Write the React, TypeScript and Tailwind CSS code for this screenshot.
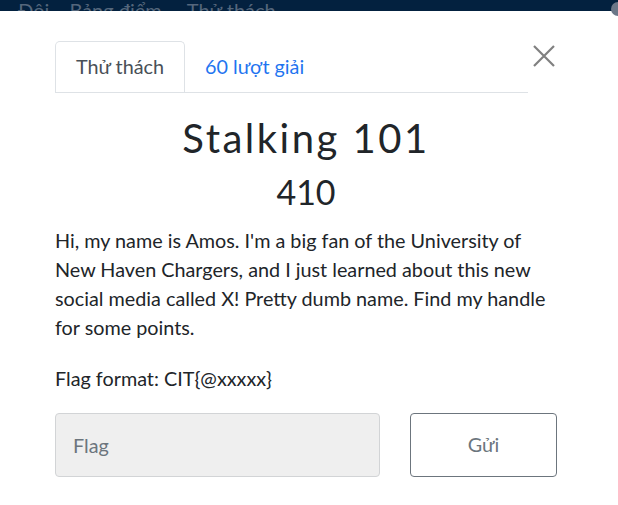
import React from "react";

const NavBar = () => (
	<div className="h-[11px] overflow-hidden bg-[#03213f]">
		<div className="flex pl-[18px] text-[20px] leading-[20px] text-[#55677c]">
			<span>Đội</span>
			<span className="ml-[20px]">Bảng điểm</span>
			<span className="ml-[25px]">Thử thách</span>
		</div>
	</div>
);

const CloseIcon = () => (
	<svg width="22" height="22" viewBox="0 0 22 22" className="text-[#808080]">
		<path d="M1 1L21 21M21 1L1 21" stroke="currentColor" strokeWidth="2.2" />
	</svg>
);

export default function App() {
	return (
		<div className="relative w-[618px] h-[505px] overflow-hidden bg-white font-['Lato',sans-serif]">
			<NavBar />
			<div className="absolute right-[-7px] top-[2px] w-[14px] h-[14px] rounded-full bg-[#6b7788]"></div>
			<div className="w-[612px] pt-[30px] px-[55px] text-[#212529]">
				<div className="flex items-start">
					<div className="flex w-[473px] border-b border-[#dee2e6] text-[19.8px]">
						<div className="h-[51px] px-[20px] flex items-center border border-b-0 border-[#dee2e6] rounded-t-[5px] text-[#495057] mb-[-1px] bg-white">
							Thử thách
						</div>
						<div className="h-[51px] px-[20px] flex items-center text-[#1f75f0]">
							60 lượt giải
						</div>
					</div>
					<button className="ml-[5px] mt-[4px] w-[22px] h-[22px] flex items-center justify-center">
						<CloseIcon />
					</button>
				</div>
				<h2 className="text-center text-[40px] leading-[48px] tracking-[2.5px] mt-[21px]">
					Stalking 101
				</h2>
				<h4 className="text-center text-[34px] leading-[40px] mt-[10px]">410</h4>
				<div className="mt-[14px] text-[19.8px] leading-[29px]">
					<p>
						Hi, my name is Amos. I'm a big fan of the University of New Haven
						Chargers, and I just learned about this new social media called X!
						Pretty dumb name. Find my handle for some points.
					</p>
					<p className="mt-[22px]">Flag format: CIT{"{@xxxxx}"}</p>
				</div>
				<div className="flex mt-[20px] gap-[30px]">
					<input
						type="text"
						placeholder="Flag"
						className="w-[325px] h-[64px] px-[17px] text-[19.8px] bg-[#efefef] border border-[#d2d4d6] rounded-[4px] placeholder:text-[#6c757d] outline-none"
					/>
					<button className="w-[147px] h-[64px] border border-[#6c757d] rounded-[4px] text-[19.8px] text-[#6c757d] bg-white">
						Gửi
					</button>
				</div>
			</div>
		</div>
	);
}
